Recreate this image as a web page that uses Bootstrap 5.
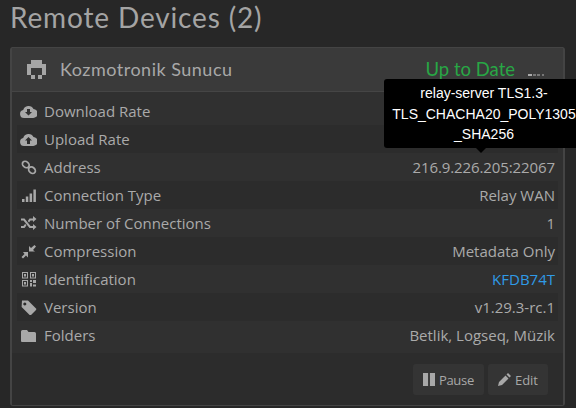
<!DOCTYPE html>
<html lang="en">
<head>
    <meta charset="UTF-8">
    <title>Remote Devices</title>
    <link href="https://cdn.jsdelivr.net/npm/bootstrap@5.3.0/dist/css/bootstrap.min.css" rel="stylesheet">
    <style>
        html, body { height: 408px; overflow: hidden; }
        body { background: #272727; color: #aaa; font: 15px/20px "Open Sans", sans-serif; padding: 0 10px; }
        .page-title { font: 400 28px/34px Lato, sans-serif; color: #a4a4a4; letter-spacing: 0.85px; margin: 0; height: 47px; }
        .device-panel { background: #303030; border: 2px solid #444; border-top-width: 0; border-radius: 3px; height: 359px; width: 555px; position: relative; }
        .device-head { background: #3a3a3a; height: 45px; padding: 0 19px 1px 15px; border-bottom: 1px solid #454545; border-top: 1px solid #444; font-family: Lato, sans-serif; font-size: 18px; }
        .device-head svg { margin-top: 1px; }
        .device-name { margin-left: 14px; color: #a8a8a8; letter-spacing: .5px; }
        .sync-state { color: #28a745; font-size: 18.500px; }
        .dots { width: 16px; margin-left: 13px; height: 2px; margin-top: 11px; background: linear-gradient(90deg, #aaa 0 4px, transparent 4px), repeating-linear-gradient(90deg, #777 0 3px, transparent 3px 4.500px); }
        .device-body { padding: 5px 5px 0; height: 261px; }
        .info-row { height: 28px; padding: 0 3px; }
        .info-row:nth-child(even) { background: #2c2c2c; }
        .info-row svg { width: 17px; height: 15px; margin-right: 7px; fill: #a8a8a8; flex: none; }
        .info-link { color: #2f9ae6; }
        .addr-value { letter-spacing: -.1px; }
        .device-foot { background: #2c2c2c; height: 52px; padding: 11px 15px 0 0; gap: 4px; }
        .foot-btn { background: #343434; border-radius: 3px; color: #a8a8a8; font-size: 13px; height: 31px; padding: 0 10px; }
        .foot-btn svg { width: 13px; height: 13px; fill: #a8a8a8; margin-right: 4px; }
        .pause-btn { letter-spacing: -.3px; }
        .pause-btn svg { width: 12px; }
        .relay-tip { position: absolute; left: 372px; top: 32px; width: 200px; height: 69px; background: #000; color: #fff; border-radius: 3px; font: 14px/20.5px "Liberation Sans", sans-serif; text-align: center; padding: 4px 0; }
        .relay-tip::after { content: ""; position: absolute; left: 92px; bottom: -5px; border: 5px solid transparent; border-top-color: #000; border-bottom: 0; }
    </style>
</head>
<body>
    <h1 class="page-title">Remote Devices (2)</h1>

    <div class="device-panel">
        <div class="device-head d-flex align-items-center">
            <svg width="19" height="19" viewBox="0 0 5 5" fill="#a6a6a6" shape-rendering="crispEdges"><path d="M1 0h3v1h1v3H4V2H1v2H0V1h1zM1 4h1v1H1zM3 4h1v1H3z"/></svg>
            <span class="device-name">Kozmotronik Sunucu</span>
            <span class="sync-state ms-auto">Up to Date</span>
            <span class="dots"></span>
        </div>

        <div class="device-body">
            <div class="info-row d-flex align-items-center justify-content-between">
                <span class="d-flex align-items-center"><svg viewBox="0 0 17 15"><path d="M4 14a4 4 0 0 1-.8-7.900A5.500 5.500 0 0 1 13.500 5 4.500 4.500 0 0 1 13 14z"/><path d="M7 5h3v3h2l-3.500 3.500L5 8h2z" fill="#303030"/></svg>Download Rate</span>
                <span>0 B/s (0,24 KiB)</span>
            </div>
            <div class="info-row d-flex align-items-center justify-content-between">
                <span class="d-flex align-items-center"><svg viewBox="0 0 17 15"><path d="M4 14a4 4 0 0 1-.8-7.900A5.500 5.500 0 0 1 13.500 5 4.500 4.500 0 0 1 13 14z"/><path d="M7 12h3V8.500h2L8.500 5 5 8.500h2z" fill="#2c2c2c"/></svg>Upload Rate</span>
                <span>0 B/s (0,24 KiB)</span>
            </div>
            <div class="info-row d-flex align-items-center justify-content-between">
                <span class="d-flex align-items-center"><svg viewBox="0 0 17 15"><g fill="none" stroke="#a8a8a8" stroke-width="1.700"><ellipse cx="5.800" cy="4.500" rx="3.700" ry="2.900" transform="rotate(40 5.800 4.500)"/><ellipse cx="12" cy="10.200" rx="3.700" ry="2.900" transform="rotate(40 12 10.200)"/></g></svg>Address</span>
                <span class="addr-value">216.9.226.205:22067</span>
            </div>
            <div class="info-row d-flex align-items-center justify-content-between">
                <span class="d-flex align-items-center"><svg viewBox="0 0 17 15"><path d="M2 11h2.500v3H2zM5.800 8.500h2.500V14H5.800zM9.600 5.500h2.500V14H9.600zM13.400 1.500h2.500V14h-2.500z"/></svg>Connection Type</span>
                <span>Relay WAN</span>
            </div>
            <div class="info-row d-flex align-items-center justify-content-between">
                <span class="d-flex align-items-center"><svg viewBox="0 0 17 15"><path d="M1 2.500h3.500l6 7.500H13V8l3.500 3L13 14v-2h-3.500l-6-7.500H1zM1 10h2.500l1.700-2.200 1.200 1.600L4.500 12H1zM9.500 2.500H13V0l3.500 3L13 6V4.500h-2.500L9 6.500 7.800 5z"/></svg>Number of Connections</span>
                <span>1</span>
            </div>
            <div class="info-row d-flex align-items-center justify-content-between">
                <span class="d-flex align-items-center"><svg viewBox="0 0 17 15"><path d="M9 7.500V2l2 2 3.500-3L16 2.500 13 6l2 1.500zM8 8v5.500l-2-2-3 3L1.500 13l3-3L3 8z"/></svg>Compression</span>
                <span>Metadata Only</span>
            </div>
            <div class="info-row d-flex align-items-center justify-content-between">
                <span class="d-flex align-items-center"><svg viewBox="0 0 17 15"><path fill-rule="evenodd" d="M2 0h6v6.500H2zM3 1v4.500h4V1zM10 0h6v6.500h-6zM11 1v4.500h4V1zM2 8h6v6.500H2zM3 9v4.500h4V9zM10 8h2v2h-2zM13 8h3v3h-3zM10 11h2v3.500h-2zM13 12.500h3v2h-3z"/><path d="M4 2h2v2.500H4zM12 2h2v2.500h-2zM4 10h2v2.500H4z"/></svg>Identification</span>
                <span class="info-link">KFDB74T</span>
            </div>
            <div class="info-row d-flex align-items-center justify-content-between">
                <span class="d-flex align-items-center"><svg viewBox="0 0 17 15"><path fill-rule="evenodd" d="M2 .500h6l8 8a1 1 0 0 1 0 1.400l-5 5a1 1 0 0 1-1.400 0l-8-8zM4.800 2.500a1.500 1.500 0 1 0 .01 0z"/></svg>Version</span>
                <span>v1.29.3-rc.1</span>
            </div>
            <div class="info-row d-flex align-items-center justify-content-between">
                <span class="d-flex align-items-center"><svg viewBox="0 0 17 15"><path d="M2.500 2H7l1.500 2h6a1.500 1.500 0 0 1 1.500 1.500V14H2a1 1 0 0 1-1-1V3.500A1.500 1.500 0 0 1 2.500 2z"/></svg>Folders</span>
                <span>Betlik, Logseq, Müzik</span>
            </div>
        </div>

        <div class="device-foot d-flex justify-content-end">
            <span class="foot-btn pause-btn d-flex align-items-center"><svg viewBox="0 0 13 13" preserveAspectRatio="none"><path d="M0 0h5.500v13H0zM7.500 0H13v13H7.500z"/></svg>Pause</span>
            <span class="foot-btn d-flex align-items-center"><svg viewBox="0 0 13 13"><path d="M0 13l1-4 6.500-6.500 3 3L4 12zM8.500 1.500 10 0l3 3-1.500 1.500z"/></svg>Edit</span>
        </div>

        <div class="relay-tip">relay-server TLS1.3-<br>TLS_CHACHA20_POLY1305<br>_SHA256</div>
    </div>

    <script src="https://cdn.jsdelivr.net/npm/bootstrap@5.3.0/dist/js/bootstrap.bundle.min.js"></script>
</body>
</html>
